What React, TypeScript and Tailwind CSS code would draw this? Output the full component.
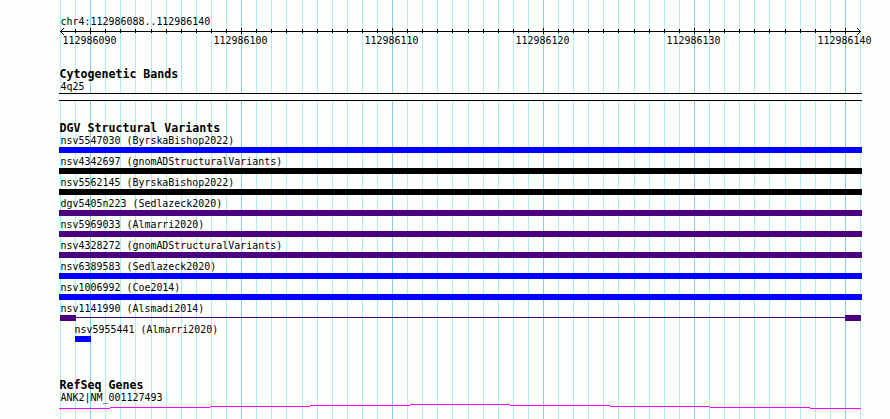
interface Variant {
  name: string;
  color: string;
}

const START = 60;
const STEP = 800 / 53;
const posX = (i: number) => Math.round(START + i * STEP);

const TICKS = Array.from({ length: 54 }, (_, i) => i);
const isMajor = (i: number) => i % 10 === 2;

const VARIANTS: Variant[] = [
  { name: 'nsv5547030 (ByrskaBishop2022)', color: 'bg-[#0000ff]' },
  { name: 'nsv4342697 (gnomADStructuralVariants)', color: 'bg-black' },
  { name: 'nsv5562145 (ByrskaBishop2022)', color: 'bg-black' },
  { name: 'dgv5405n223 (Sedlazeck2020)', color: 'bg-[#4b0082]' },
  { name: 'nsv5969033 (Almarri2020)', color: 'bg-[#4b0082]' },
  { name: 'nsv4328272 (gnomADStructuralVariants)', color: 'bg-[#4b0082]' },
  { name: 'nsv6389583 (Sedlazeck2020)', color: 'bg-[#0000ff]' },
  { name: 'nsv1006992 (Coe2014)', color: 'bg-[#0000ff]' },
];

function Label({ text }: { text: string }) {
  return <p className="h-3 pl-[1.5px] text-[9.967px] leading-3 origin-center scale-y-110 whitespace-pre">{text}</p>;
}

function TrackTitle({ text }: { text: string }) {
  return <h2 className="h-[13px] pl-[0.5px] text-[11.628px] leading-[13px] font-bold whitespace-pre">{text}</h2>;
}

function GridLines() {
  return (
    <svg className="absolute inset-0" width="890" height="419" shapeRendering="crispEdges">
      {TICKS.map((i) => (
        <rect key={i} x={posX(i)} y="0" width="1" height="419" fill={isMajor(i) ? '#87ceeb' : '#afeeee'} />
      ))}
    </svg>
  );
}

function Ruler() {
  return (
    <div className="-mt-px -ml-[59px] h-[20px]">
      <svg className="block" width="890" height="8" shapeRendering="crispEdges">
        <rect x="60" y="4" width="801" height="1" />
        {TICKS.slice(1, -1).map((i) => (
          <rect key={i} x={posX(i)} y={isMajor(i) ? 1 : 2} width="1" height={isMajor(i) ? 6 : 4} />
        ))}
        {[1, 2, 3].map((d) => (
          <g key={d}>
            <rect x={60 + d} y={4 - d} width="1" height="1" />
            <rect x={60 + d} y={4 + d} width="1" height="1" />
            <rect x={860 - d} y={4 - d} width="1" height="1" />
            <rect x={860 - d} y={4 + d} width="1" height="1" />
          </g>
        ))}
      </svg>
      <div className="flex pl-[61px]">
        {[112986090, 112986100, 112986110, 112986120, 112986130, 112986140].map((n) => (
          <div key={n} className="w-[151px] shrink-0">
            <Label text={String(n)} />
          </div>
        ))}
      </div>
    </div>
  );
}

export default function App() {
  return (
    <main className="relative w-[890px] h-[419px] overflow-hidden bg-[#fcfffc] text-black font-['DejaVu_Sans_Mono',monospace]">
      <GridLines />
      <div className="relative ml-[59px] w-[803px] pt-4">
        <Label text="chr4:112986088..112986140" />
        <Ruler />

        <section className="pt-[21px]">
          <TrackTitle text="Cytogenetic Bands" />
          <Label text="4q25" />
          <div className="h-2 border-y border-black bg-[#fcfffc]" />
        </section>

        <section className="pt-[21px]">
          <TrackTitle text="DGV Structural Variants" />
          {VARIANTS.map((v) => (
            <div key={v.name} className="h-[21px]">
              <Label text={v.name} />
              <div className={`h-1.5 ${v.color}`} />
            </div>
          ))}
          <div className="h-[21px]">
            <Label text="nsv1141990 (Alsmadi2014)" />
            <div className="ml-px w-[801px] flex">
              <div className="h-1.5 w-4 bg-[#4b0082]" />
              <div className="mt-0.5 h-px flex-1 bg-[#4b0082]" />
              <div className="h-1.5 w-4 bg-[#4b0082]" />
            </div>
          </div>
          <div className="h-[21px] pl-[14px]">
            <Label text="nsv5955441 (Almarri2020)" />
            <div className="ml-0.5 h-1.5 w-4 bg-[#0000ff]" />
          </div>
        </section>

        <section className="pt-[34px]">
          <TrackTitle text="RefSeq Genes" />
          <Label text="ANK2|NM_001127493" />
          <svg className="block" width="803" height="8" shapeRendering="crispEdges" fill="#ff00ff">
            <rect x="0" y="4" width="51" height="1" />
            <rect x="51" y="3" width="100" height="1" />
            <rect x="151" y="2" width="100" height="1" />
            <rect x="251" y="1" width="100" height="1" />
            <rect x="351" y="0" width="100" height="1" />
            <rect x="451" y="1" width="100" height="1" />
            <rect x="551" y="2" width="100" height="1" />
            <rect x="651" y="3" width="100" height="1" />
            <rect x="751" y="4" width="51" height="1" />
          </svg>
        </section>
      </div>
    </main>
  );
}
